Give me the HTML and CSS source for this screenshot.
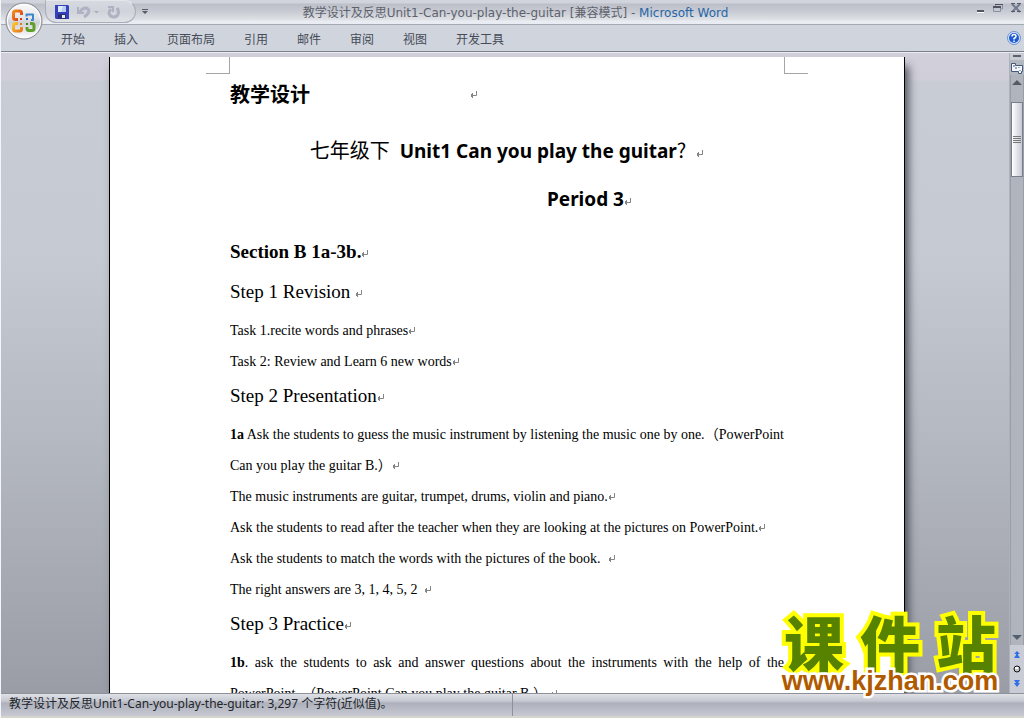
FILE: index.html
```html
<!DOCTYPE html>
<html lang="zh-CN">
<head>
<meta charset="utf-8">
<title>教学设计及反思Unit1-Can-you-play-the-guitar - Microsoft Word</title>
<link rel="stylesheet" href="styles.css">
</head>
<body>
<svg class="defs" aria-hidden="true">
  <symbol id="ret" viewBox="0 0 8 8"><path d="M6.500 0V4.500H1M2.500 2V7M1.500 3V6" fill="none" stroke="#858585"/></symbol>
</svg>
<header class="titlebar">
  <button class="office" aria-label="Office">
    <svg viewBox="0 0 38 38" width="38" height="38">
      <defs>
        <linearGradient id="orb" x1="0" y1="0" x2="0" y2="1"><stop offset="0" stop-color="#fafafa"/><stop offset=".4" stop-color="#e6e6ea"/><stop offset=".55" stop-color="#cfd0d6"/><stop offset="1" stop-color="#fff"/></linearGradient>
        <linearGradient id="red" x1="0" y1="0" x2="1" y2="1"><stop offset="0" stop-color="#f08a1d"/><stop offset="1" stop-color="#d83a12"/></linearGradient>
        <linearGradient id="gold" x1="0" y1="0" x2="1" y2="1"><stop offset="0" stop-color="#f9c52e"/><stop offset="1" stop-color="#e8791a"/></linearGradient>
      </defs>
      <circle cx="19" cy="19" r="18" fill="url(#orb)" stroke="#85878e"/>
      <circle cx="19" cy="19" r="16.500" fill="none" stroke="#fff"/>
      <g fill="none" stroke-width="3" stroke-linejoin="round">
        <path d="M13 17.500H10.500Q8.500 17.500 8.500 15.500V11Q8.500 9 10.500 9H14.500Q16.500 9 16.500 11V13" stroke="url(#red)"/>
        <path d="M21.500 14.500V12.500H28V18H26" stroke="#3b86cf" stroke-width="2"/>
        <path d="M13 21.500H10.500Q8.500 21.500 8.500 23.500V27Q8.500 29 10.500 29H14.500Q16.500 29 16.500 27V25" stroke="url(#gold)"/>
        <path d="M25 21.500H27Q29 21.500 29 23.500V26.500Q29 28.500 27 28.500H24Q22 28.500 22 26.500V25" stroke="#5fa02c"/>
      </g>
      <path d="M15 16H17V18H15Z" fill="#d83a12"/><path d="M21 16H23V18H21Z" fill="#2c69b8"/>
      <path d="M15 21H17V23H15Z" fill="#e8791a"/><path d="M21 21H23V23H21Z" fill="#3f8420"/>
    </svg>
  </button>
  <div class="quick">
    <button aria-label="保存"><svg width="14" height="14" viewBox="0 0 14 14"><path d="M0 0H13L14 1V14H1L0 13Z" fill="#3440bd"/><path d="M3 1H11V7H3Z" fill="#dce9fb"/><path d="M8 1H11V7H6Z" fill="#b5cdf2"/><path d="M3 9H11V14H3Z" fill="#2a2f78"/><path d="M7 10H10V13H7Z" fill="#e8eaf4"/></svg></button>
    <button aria-label="撤销"><svg width="22" height="14" viewBox="0 0 22 14"><path d="M1 2V8H7" fill="none" stroke="#aeb2c2" stroke-width="2"/><path d="M3 7C5 3 9 2 11 4S11 10 7 12" fill="none" stroke="#aeb2c2" stroke-width="3"/><path d="M17 6H22L19.500 8.500Z" fill="#a9aebb"/></svg></button>
    <button aria-label="重复"><svg width="14" height="14" viewBox="0 0 14 14"><path d="M1 2H6V7" fill="none" stroke="#aeb2c2" stroke-width="2"/><path d="M4 4C0 8 3 12 7 12S13 7 10 3" fill="none" stroke="#aeb2c2" stroke-width="3"/></svg></button>
  </div>
  <button class="more" aria-label="自定义快速访问工具栏"><svg width="6" height="6" viewBox="0 0 6 6"><path d="M0 0H6V1H0ZM0 2H6L3 5Z" fill="#555a66"/></svg></button>
  <h1 class="title">教学设计及反思Unit1-Can-you-play-the-guitar [兼容模式] - <span>Microsoft Word</span></h1>
  <div class="winbtns">
    <button aria-label="最小化"><svg width="10" height="10" viewBox="0 0 10 10"><path d="M2 7H9V9H2Z" fill="#50555f"/><path d="M2 9H9V10H2Z" fill="#fff"/></svg></button>
    <button aria-label="还原"><svg width="10" height="10" viewBox="0 0 10 10"><path d="M2.500 3V1.500H9.500V6H7.500M.500 4.500H7.500V8.500H.500Z" fill="none" stroke="#8791a5"/><path d="M2 1H10V2H2ZM0 3H8V5H0Z" fill="#4f5460"/></svg></button>
    <button aria-label="关闭"><svg width="10" height="10" viewBox="0 0 10 10"><path d="M1 1L9 9M9 1L1 9" stroke="#727a8c" stroke-width="2"/><path d="M0 0H4V1H0ZM6 0H10V1H6ZM0 8H4V9H0ZM6 8H10V9H6Z" fill="#555b69"/></svg></button>
  </div>
</header>
<nav class="tabs">
  <a href="#">开始</a><a href="#">插入</a><a href="#">页面布局</a><a href="#">引用</a><a href="#">邮件</a><a href="#">审阅</a><a href="#">视图</a><a href="#">开发工具</a>
  <button class="help" aria-label="帮助"><svg width="14" height="14" viewBox="0 0 14 14"><circle cx="7" cy="7" r="6.500" fill="#d5e3f8" stroke="#6f94cf"/><circle cx="7" cy="7" r="5" fill="#1f5bd0"/><path d="M5 5.500Q5 3.500 7 3.500T9 5.500Q9 6.500 7 7.500V8.500M7 9.500V11" fill="none" stroke="#fff" stroke-width="1.500"/></svg></button>
</nav>
<main class="work">
  <div class="canvas">
    <article class="page">
      <div class="corners"><i class="corner"></i><i class="corner right"></i></div>
      <p class="lead"><b>教学设计</b><svg class="ret"><use href="#ret"/></svg></p>
      <p class="big unit"><span class="kai">七年级下</span><b>Unit1 Can you play the guitar</b><span class="kai">?</span><svg class="ret"><use href="#ret"/></svg></p>
      <p class="big period"><b>Period 3</b><svg class="ret"><use href="#ret"/></svg></p>
      <h2 class="section">Section B 1a-3b.<svg class="ret"><use href="#ret"/></svg></h2>
      <h3>Step 1 Revision <svg class="ret"><use href="#ret"/></svg></h3>
      <p>Task 1.recite words and phrases<svg class="ret"><use href="#ret"/></svg></p>
      <p>Task 2: Review and Learn 6 new words<svg class="ret"><use href="#ret"/></svg></p>
      <h3>Step 2 Presentation<svg class="ret"><use href="#ret"/></svg></h3>
      <p><span class="full"><b>1a</b> Ask the students to guess the music instrument by listening the music one by one.（PowerPoint</span> Can you play the guitar B.）<svg class="ret"><use href="#ret"/></svg></p>
      <p>The music instruments are guitar, trumpet, drums, violin and piano.<svg class="ret"><use href="#ret"/></svg></p>
      <p>Ask the students to read after the teacher when they are looking at the pictures on PowerPoint.<svg class="ret"><use href="#ret"/></svg></p>
      <p>Ask the students to match the words with the pictures of the book. &nbsp;<svg class="ret"><use href="#ret"/></svg></p>
      <p>The right answers are 3, 1, 4, 5, 2 &nbsp;<svg class="ret"><use href="#ret"/></svg></p>
      <h3>Step 3 Practice<svg class="ret"><use href="#ret"/></svg></h3>
      <p><span class="full"><b>1b</b>. ask the students to ask and answer questions about the instruments with the help of the</span> PowerPoint. （PowerPoint Can you play the guitar B.） <svg class="ret"><use href="#ret"/></svg></p>
    </article>
  </div>
  <aside class="scroll">
    <i class="split"></i>
    <button class="ruler" aria-label="标尺"><svg width="12" height="12" viewBox="0 0 12 12"><path d="M.500 1.500H4.500V3.500H11.500V9.500H10.500V11.500H7.500V9.500H.500Z" fill="#f3f6fb" stroke="#45597d"/><path d="M3 3V5M5 5V7M8 5V6M9 8V9" stroke="#45597d"/></svg></button>
    <div class="track">
      <button aria-label="向上"><svg width="10" height="5" viewBox="0 0 10 5"><path d="M5 0L10 5H0Z" fill="#555a63"/></svg></button>
      <div class="thumb"><i></i><i></i><i></i><i></i></div>
      <button class="down" aria-label="向下"><svg width="10" height="5" viewBox="0 0 10 5"><path d="M0 0H10L5 5Z" fill="#555f6f"/></svg></button>
    </div>
    <div class="browse">
      <button aria-label="前一页"><svg width="6" height="8" viewBox="0 0 6 8"><path d="M3 0L6 3H4V4L6 7H0L2 4V3H0Z" fill="#2f6fe8"/></svg></button>
      <button aria-label="选择浏览对象"><svg width="8" height="8" viewBox="0 0 8 8"><circle cx="4" cy="4" r="3" fill="#c4c4c4" stroke="#111"/><path d="M2 2H5V4H2Z" fill="#fff"/></svg></button>
      <button aria-label="下一页"><svg width="6" height="8" viewBox="0 0 6 8"><path d="M0 1H6L4 4H6L3 8L0 4H2Z" fill="#2f6fe8"/></svg></button>
    </div>
  </aside>
</main>
<footer class="status"><span>教学设计及反思Unit1-Can-you-play-the-guitar: 3,297 个字符(近似值)。</span></footer>
<div class="mark">
  <div class="mark-name"><span>课</span><span>件</span><span>站</span></div>
  <div class="mark-url">www.kjzhan.com</div>
</div>
</body>
</html>
```
FILE: styles.css
```css
* { box-sizing: border-box; }
body {
  margin: 0;
  height: 100vh;
  display: flex;
  flex-direction: column;
  overflow: hidden;
  position: relative;
  border-left: 1px solid #f4f5f8;
  background: #d0d4dd;
  font-family: "DejaVu Sans", "Noto Sans CJK SC", sans-serif;
  font-size: 12px;
}
button { padding: 0; border: 0; background: none; display: flex; align-items: center; justify-content: center; }
.defs { position: absolute; width: 0; height: 0; }
svg { display: block; }

.titlebar {
  display: flex;
  align-items: flex-start;
  height: 25px;
  flex: none;
  position: relative;
  background: linear-gradient(#d2d5dd 0, #d0d3db 3px, #bcbfc8 4px, #c9ccd4 12px, #e0e2e6 20px, #e9edf3 21px, #e9edf3 24px, #a3a8b3 24px);
}
.office { position: absolute; left: 4px; top: 2px; z-index: 2; }
.quick {
  display: flex;
  align-items: center;
  gap: 8px;
  flex: none;
  margin-left: 44px;
  width: 91px;
  height: 23px;
  padding-left: 9px;
  border: 1px solid #a9adb7;
  border-top-color: #e4e6eb;
  border-radius: 0 12px 12px 12px;
  background: linear-gradient(#d6d9e0, #d0d3da 50%, #e0e2e7);
}
.more { margin: 9px 0 0 6px; }
.title {
  flex: 1;
  margin: 0;
  padding-right: 92px;
  text-align: center;
  font-size: 12px;
  font-weight: 400;
  line-height: 26px;
  color: #5d626d;
  white-space: nowrap;
}
.title span { color: #2666a8; }
.winbtns { display: flex; gap: 8px; padding: 3px 3px 0 0; }

.tabs {
  display: flex;
  align-items: center;
  gap: 29px;
  flex: none;
  height: 27px;
  padding: 0 3px 0 60px;
  border-bottom: 1px solid #7b818c;
  background: #d0d4dd;
}
.tabs a { color: #454b57; text-decoration: none; }
.help { margin-left: auto; }

.work { flex: 1; min-height: 0; display: flex; border-top: 1px solid #e9edf3; }
.canvas {
  flex: 1;
  min-width: 0;
  overflow: hidden;
  padding: 4px 0 0 4px;
  background: linear-gradient(#d1cfda 0, #d0ced9 27px, #c8ccd4 28px, #c6cad2 200px, #b3b7bf 400px, #9a9da6 640px);
}
.page {
  max-width: 796px;
  height: 100%;
  margin: 0 auto;
  padding: 0 120px;
  border: solid #000;
  border-width: 0 1px;
  background: #fff;
  color: #000;
  box-shadow: 4px 9px 8px rgba(40, 44, 54, .7);
  font-family: "Liberation Serif", "Noto Sans CJK SC", serif;
  font-size: 14px;
  line-height: 31px;
}
.page p, .page h2, .page h3 { margin: 0; white-space: nowrap; }
.corners { display: flex; justify-content: space-between; height: 20px; margin: 0 -24px; }
.corner { width: 24px; height: 17px; border: solid #a5a5a8; border-width: 0 1px 1px 0; }
.corner.right { border-width: 0 0 1px 1px; }
.ret { display: inline-block; width: 8px; height: 8px; }
.page .lead { display: flex; align-items: center; justify-content: space-between; width: 248px; font-size: 19px; line-height: 36px; }
.lead b, .kai { font-size: 20px; }
.page .big { font-family: "Noto Sans", "Noto Sans CJK SC", sans-serif; font-size: 19px; line-height: 48px; text-align: center; }
.page .unit { margin-top: 13px; }
.kai { margin-right: 10px; font-family: "Noto Sans CJK SC", sans-serif; font-weight: 400; }
.page .period { padding-left: 165px; }
.page .section { padding: 10px 0 2px; font-size: 19px; line-height: 38px; }
.page h3 { padding-bottom: 4px; font-size: 19px; font-weight: 400; line-height: 38px; }
.full { display: block; text-align: justify; text-align-last: justify; }

.scroll { width: 15px; flex: none; display: flex; flex-direction: column; background: #c9ccd5; border-left: 1px solid #aeb2bb; }
.split { width: 8px; height: 2px; margin: 2px auto 3px; background: #5c616c; }
.ruler { height: 15px; background: #b3b7c0; }
.track { flex: 1; display: flex; flex-direction: column; background: #b0b4bd; border: 1px solid #9a9ea8; border-width: 0 1px; }
.track button { height: 15px; }
.thumb {
  display: flex;
  flex-direction: column;
  align-items: center;
  justify-content: center;
  gap: 1px;
  height: 75px;
  margin-top: 12px;
  border: 1px solid #7a7e88;
  background: linear-gradient(90deg, #fff, #e2e4ea 50%, #c6cad6);
}
.thumb i { width: 8px; height: 1px; background: #777; }
.track .down { margin-top: auto; }
.browse { display: flex; flex-direction: column; align-items: center; justify-content: space-evenly; height: 48px; }

.status {
  flex: none;
  display: flex;
  height: 25px;
  border-top: 1px solid #8d919c;
  border-bottom: 2px solid #d6d4ce;
  background: linear-gradient(#dfe1e7 0, #c6c9d1 7px, #aeb1bb 9px, #c6c9d2 22px);
  color: #22252b;
  font-family: "Noto Sans", "Noto Sans CJK SC", sans-serif;
}
.status span { width: 50%; padding-left: 8px; border-right: 1px solid #8d919c; line-height: 20px; }

.mark { position: absolute; right: 20px; bottom: 26px; width: 228px; font-weight: 700; }
.mark-name {
  display: flex;
  justify-content: space-around;
  padding-bottom: 4px;
  font-family: "Noto Sans CJK SC", sans-serif;
  font-size: 60px;
  font-weight: 900;
  line-height: 50px;
  color: #568200;
  -webkit-text-stroke: 8px #ff0;
  paint-order: stroke fill;
}
.mark-url {
  font-family: "Liberation Sans", sans-serif;
  font-size: 27px;
  line-height: 22px;
  text-align: center;
  color: #b05a00;
  -webkit-text-stroke: 5px #fff;
  paint-order: stroke fill;
}
```
